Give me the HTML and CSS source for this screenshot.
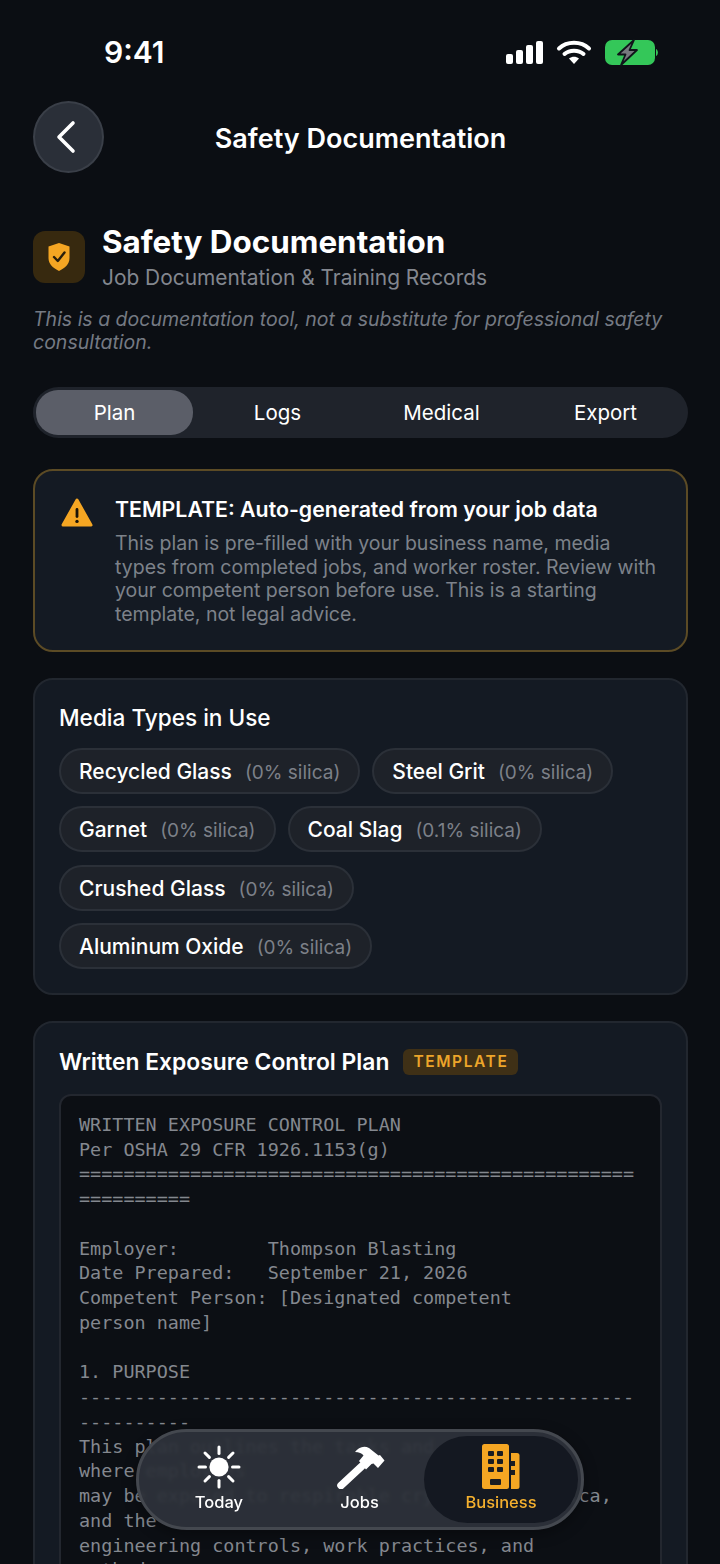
FILE: index.html
```html
<!DOCTYPE html>
<html lang="en">
<head>
<meta charset="utf-8">
<title>Safety Documentation</title>
<link rel="stylesheet" href="styles.css">
</head>
<body>
<div class="screen">
  <div class="status">
    <span class="time">9:41</span>
    <svg class="status-icons" width="152" height="27" viewBox="0 0 152 27">
      <g fill="#fff">
        <rect x="0" y="15" width="7" height="10" rx="2"/>
        <rect x="10" y="11" width="7" height="14" rx="2"/>
        <rect x="20" y="6" width="7" height="19" rx="2"/>
        <rect x="30" y="2" width="7" height="23" rx="2"/>
      </g>
      <g fill="none" stroke="#fff" stroke-linecap="round" stroke-width="4">
        <path d="M53 9.5 C61 1.8 75 1.8 83 9.5"/>
        <path d="M58.5 15 C63.5 10.5 72.5 10.5 77.5 15"/>
      </g>
      <path d="M63 19.5 C66 17 70 17 73 19.5 L68 25 Z" fill="#fff"/>
      <rect x="99" y="1" width="50" height="25" rx="7" fill="#34c759"/>
      <path d="M150 10 C152.5 11 152.5 16 150 17 Z" fill="#34c759"/>
      <path d="M128 1 L112 15.5 H119.5 L115 26 L131 11 H123.5 Z" fill="#76797e" stroke="#10141a" stroke-width="1.8" stroke-linejoin="round"/>
    </svg>
  </div>

  <header class="topbar">
    <button class="back" aria-label="Back">
      <svg width="26" height="36" viewBox="0 0 26 36"><path d="M20 4 L6 18 L20 32" fill="none" stroke="#fff" stroke-width="3.6" stroke-linecap="round" stroke-linejoin="round"/></svg>
    </button>
    <h1 class="topbar-title">Safety Documentation</h1>
    <span></span>
  </header>

  <section class="intro">
    <div class="intro-icon">
      <svg width="24" height="30" viewBox="0 0 24 30"><path d="M12 1 L22.5 4.5 V16 C22.5 22 18 26 12 29 C6 26 1.5 22 1.5 16 V4.5 Z" fill="#f5a623"/><path d="M7 15 L10.8 19 L17.5 10.5" fill="none" stroke="#2a1f0c" stroke-width="2.4" stroke-linecap="round" stroke-linejoin="round"/></svg>
    </div>
    <div>
      <h2 class="intro-title">Safety Documentation</h2>
      <p class="intro-sub">Job Documentation &amp; Training Records</p>
    </div>
  </section>
  <p class="note">This is a documentation tool, not a substitute for professional safety consultation.</p>

  <nav class="tabs">
    <span class="tab tab-active">Plan</span>
    <span class="tab">Logs</span>
    <span class="tab">Medical</span>
    <span class="tab">Export</span>
  </nav>

  <section class="alert">
    <svg class="alert-icon" width="32" height="30" viewBox="0 0 32 30"><path d="M16 2 L30 27 H2 Z" fill="#f5a623" stroke="#f5a623" stroke-width="3" stroke-linejoin="round"/><rect x="14.6" y="10" width="2.8" height="10" rx="1.4" fill="#1a1408"/><circle cx="16" cy="23.4" r="1.7" fill="#1a1408"/></svg>
    <div>
      <h3 class="alert-title">TEMPLATE: Auto-generated from your job data</h3>
      <p class="alert-body">This plan is pre-filled with your business name, media types from completed jobs, and worker roster. Review with your competent person before use. This is a starting template, not legal advice.</p>
    </div>
  </section>

  <section class="card card-media">
    <h3 class="card-title card-title-media">Media Types in Use</h3>
    <div class="chips">
      <span class="chip">Recycled Glass<small>(0% silica)</small></span>
      <span class="chip">Steel Grit<small>(0% silica)</small></span>
      <span class="chip">Garnet<small>(0% silica)</small></span>
      <span class="chip">Coal Slag<small>(0.1% silica)</small></span>
      <span class="chip">Crushed Glass<small>(0% silica)</small></span>
      <span class="chip">Aluminum Oxide<small>(0% silica)</small></span>
    </div>
  </section>

  <section class="card card-plan">
    <div class="plan-head">
      <h3 class="card-title">Written Exposure Control Plan</h3>
      <span class="badge">TEMPLATE</span>
    </div>
    <pre class="code">WRITTEN EXPOSURE CONTROL PLAN
Per OSHA 29 CFR 1926.1153(g)
==================================================
==========

Employer:        Thompson Blasting
Date Prepared:   September 21, 2026
Competent Person: [Designated competent
person name]

1. PURPOSE
--------------------------------------------------
----------
This plan outlines the tasks and
where employees
may be exposed to respirable crystalline silica,
and the
engineering controls, work practices, and
methods</pre>
  </section>

  <nav class="dock">
    <div class="dock-item">
      <svg width="44" height="44" viewBox="0 0 44 44">
        <circle cx="22" cy="22" r="9.6" fill="#fff"/>
        <g stroke="#fff" stroke-width="3" stroke-linecap="round">
          <path d="M22 2 V8.5"/><path d="M22 35.5 V42"/><path d="M2 22 H8.5"/><path d="M35.5 22 H42"/>
          <path d="M8 8 L12.4 12.4"/><path d="M31.6 31.6 L36 36"/><path d="M8 36 L12.4 31.6"/><path d="M31.6 12.4 L36 8"/>
        </g>
      </svg>
      <span>Today</span>
    </div>
    <div class="dock-item">
      <svg width="50" height="44" viewBox="0 0 50 44">
        <path d="M6 40.5 L27 21" stroke="#fff" stroke-width="7.5" stroke-linecap="round"/>
        <path d="M20 7 C23 2.5 29 0 34 3 L43.5 10.5 L45 10 L49.5 15.5 L43 23 L38.5 18.5 L36.5 19 L31 24.5 L24 16 L28.5 10.5 C27 8.5 24 7 20 7 Z" fill="#fff"/>
      </svg>
      <span>Jobs</span>
    </div>
    <div class="dock-item dock-active">
      <svg width="38" height="46" viewBox="0 0 38 46">
        <rect x="0" y="0" width="27" height="45" rx="2.5" fill="#f5a623"/>
        <path d="M29 9 H35 A2.5 2.5 0 0 1 37.5 11.5 V42.5 A2.5 2.5 0 0 1 35 45 H29 Z" fill="#f5a623"/>
        <g fill="#1a1c22">
          <rect x="6" y="7" width="6" height="5" rx="1"/><rect x="15" y="7" width="6" height="5" rx="1"/>
          <rect x="6" y="15" width="6" height="5" rx="1"/><rect x="15" y="15" width="6" height="5" rx="1"/>
          <rect x="6" y="23" width="6" height="5" rx="1"/><rect x="15" y="23" width="6" height="5" rx="1"/>
          <rect x="8" y="35" width="11" height="6" rx="1"/>
          <rect x="29" y="17" width="4" height="5"/><rect x="29" y="26" width="4" height="5"/>
        </g>
      </svg>
      <span>Business</span>
    </div>
  </nav>
</div>
</body>
</html>
```

FILE: styles.css
```css
* { box-sizing: border-box; }
html, body { margin: 0; padding: 0; height: 100%; background: #0b0e13; }
body { overflow: hidden; font-family: Inter, "Noto Sans", sans-serif; color: #fff; }
h1, h2, h3, p { margin: 0; }

.screen { height: 1564px; overflow: hidden; padding: 33px 32px 0 33px; position: relative; }

.status { display: flex; justify-content: space-between; align-items: center; height: 38px; padding: 0 30px 0 71px; }
.time { font-size: 30px; font-weight: 600; line-height: 38px; }
.status-icons { display: block; }

.topbar { display: grid; grid-template-columns: 71px 1fr 71px; align-items: center; margin-top: 30px; }
.back { width: 71px; height: 72px; border-radius: 50%; background: #2a2f38; border: 2px solid #3a3f48; padding: 0 6px 0 0; display: flex; align-items: center; justify-content: center; }
.back svg { display: block; }
.topbar-title { text-align: center; font-size: 27px; font-weight: 600; line-height: 34px; padding-top: 3px; }

.intro { display: flex; gap: 17px; margin-top: 50px; }
.intro-icon { width: 52px; height: 52px; margin-top: 8px; border-radius: 12px; background: #37290f; display: flex; align-items: center; justify-content: center; flex: none; }
.intro-title { font-size: 31.4px; font-weight: 700; line-height: 38px; margin-bottom: 2px; }
.intro-sub { font-size: 20.9px; line-height: 30px; color: #83878f; }
.note { margin-top: 15px; font-size: 19.5px; line-height: 23.4px; font-style: italic; color: #757a83; }

.tabs { margin-top: 32px; height: 51px; padding: 3px; border-radius: 26px; background: #1f232b; display: grid; grid-template-columns: 157px 159px 159px 159px; column-gap: 5px; align-items: center; }
.tab { height: 45px; line-height: 45px; text-align: center; font-size: 20.5px; font-weight: 400; }
.tab-active { background: #5b5e68; border-radius: 22px; }

.alert { margin-top: 31px; display: flex; gap: 22px; padding: 24px 27px; background: #141a23; border: 2px solid #5c4b25; border-radius: 20px; }
.alert-icon { flex: none; margin-top: 3px; margin-left: -1px; }
.alert-title { font-size: 21.3px; font-weight: 600; line-height: 28px; }
.alert-body { margin-top: 9.5px; font-size: 19.5px; line-height: 23.4px; color: #7d828a; }

.card { background: #141a23; border: 2px solid #22272f; border-radius: 20px; padding: 23px 24px; }
.card-media { margin-top: 26px; height: 317px; }
.card-plan { margin-top: 26px; height: 700px; padding-top: 24px; }
.card-title { font-size: 22.85px; font-weight: 600; line-height: 30px; }
.card-title-media { font-size: 22.6px; font-weight: 500; }

.chips { display: flex; flex-wrap: wrap; column-gap: 12px; row-gap: 12.3px; margin-top: 15px; }
.chip { height: 46px; padding: 0 18px; border-radius: 23px; background: #1e2229; border: 2px solid #2b3038; font-size: 21px; font-weight: 500; line-height: 43px; white-space: nowrap; }
.chip small { margin-left: 13px; font-size: 19px; font-weight: 400; color: #7c8088; }

.plan-head { display: flex; align-items: center; gap: 14px; }
.badge { height: 26px; padding: 0 10px; border-radius: 6px; background: #3f3016; color: #eda52a; font-size: 15.5px; font-weight: 600; letter-spacing: 1.6px; line-height: 26px; }

.code { margin: 17px 0 0; padding: 17px 18px; background: #0c0f14; border: 2px solid #23272f; border-radius: 12px; height: 640px; font-family: "DejaVu Sans Mono", "Liberation Mono", monospace; font-size: 18.45px; line-height: 24.75px; color: #84888f; white-space: pre-wrap; }

.dock { position: absolute; left: 136px; top: 1429px; width: 448px; height: 101px; border-radius: 51px; background: rgba(46, 50, 58, 0.94); backdrop-filter: blur(1.5px); border: 3px solid #44484f; display: grid; grid-template-columns: 160px 121px 158px; padding: 4px 3px 4px 0; box-shadow: 0 4px 14px rgba(0, 0, 0, 0.35); }
.dock-item { display: flex; flex-direction: column; align-items: center; justify-content: flex-end; padding-bottom: 11px; font-size: 16.5px; font-weight: 500; line-height: 20px; }
.dock-item svg { display: block; margin-bottom: 3px; }
.dock-active { margin-left: 4px; background: #141821; border-radius: 44px; color: #f5b02e; }
.dock-active svg { margin-bottom: 2px; }
```
